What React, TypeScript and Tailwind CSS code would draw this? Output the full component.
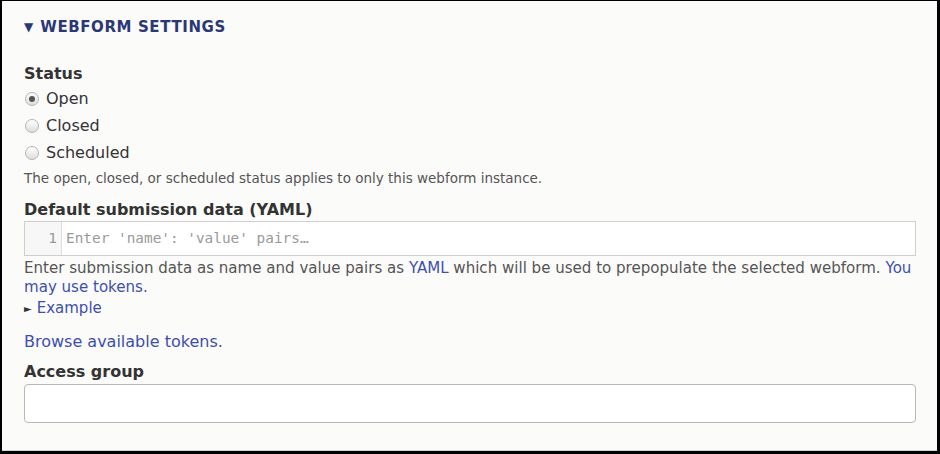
import React from 'react';

const font = { fontFamily: '"DejaVu Sans", Verdana, sans-serif' };

function Radio({ label, checked }: { label: string; checked?: boolean }) {
  return (
    <label className="flex h-[27px] items-center text-[16px] text-[#333]">
      <span className="ml-[1px] mr-[7px] flex h-[14px] w-[14px] items-center justify-center rounded-full border border-[#b4b4b4] bg-gradient-to-b from-[#ffffff] to-[#dedede]">
        {checked && <span className="h-[6px] w-[6px] rounded-full bg-[#555]" />}
      </span>
      {label}
    </label>
  );
}

export default function App() {
  return (
    <div className="h-[454px] w-[940px] bg-black pt-[1px] pr-[3px] pb-[3px] pl-[2px]" style={font}>
      <div className="h-[450px] border-b border-[#d4d4d4] bg-[#fbfbfa] pl-[22px] pr-[21px]">
        {/* summary */}
        <div className="flex h-[54px] items-center pb-[2px] text-[#2b3875]">
          <span className="mr-[7px] text-[12px]">▼</span>
          <span className="text-[15px] font-bold uppercase tracking-[0.04em]">Webform settings</span>
        </div>

        {/* Status */}
        <div className="mt-[9px] text-[16px] font-bold leading-[20px] text-[#333]">Status</div>
        <div className="mt-[1px]">
          <Radio label="Open" checked />
          <Radio label="Closed" />
          <Radio label="Scheduled" />
        </div>
        <div className="mt-[3px] text-[13.5px] leading-[18px] text-[#555]">
          The open, closed, or scheduled status applies to only this webform instance.
        </div>

        {/* YAML */}
        <div className="mt-[13px] text-[16px] font-bold leading-[20px] text-[#333]">Default submission data (YAML)</div>
        <div className="mt-[1px] flex h-[35px] border border-[#cfcfcf] bg-white">
          <div className="flex w-[37px] items-center justify-end border-r border-[#dddddd] bg-[#f7f7f7] pr-[4px] text-[14.4px] text-[#999]" style={{ fontFamily: '"DejaVu Sans Mono", monospace' }}>
            1
          </div>
          <div className="flex items-center pl-[4px] text-[14.4px] text-[#9a9a9a]" style={{ fontFamily: '"DejaVu Sans Mono", monospace' }}>
            Enter 'name': 'value' pairs…
          </div>
        </div>
        <div className="mt-[3px] text-[15.05px] leading-[19px] text-[#555]">
          Enter submission data as name and value pairs as <a className="text-[#3d4fae]">YAML</a> which will be used to prepopulate the selected webform. <a className="text-[#3d4fae]">You may use tokens.</a>
        </div>
        <div className="mt-[2px] flex items-center text-[15px] leading-[19px] text-[#3d4fae]">
          <span className="mr-[5px] text-[10px] text-[#333]">►</span>Example
        </div>

        <div className="mt-[14px] text-[16px] leading-[19px] text-[#3d4fae]">Browse available tokens.</div>

        {/* Access group */}
        <div className="mt-[11px] text-[16px] font-bold leading-[20px] text-[#333]">Access group</div>
        <div className="mt-[2px] h-[39px] rounded-[4px] border border-[#b8b8b8] bg-white" />
      </div>
    </div>
  );
}
